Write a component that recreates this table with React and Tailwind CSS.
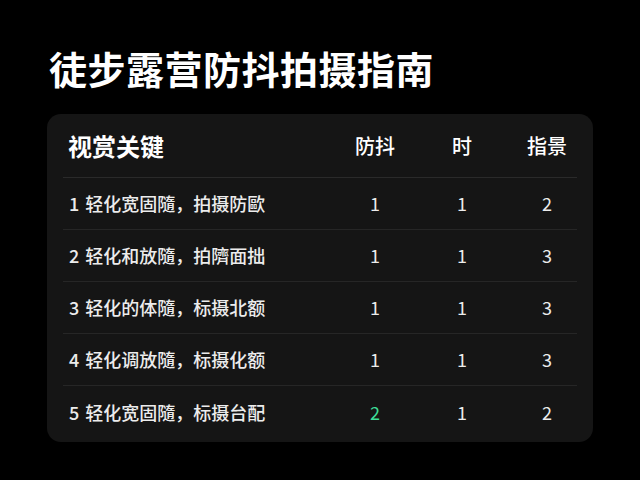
import React from 'react';

const rows = [
  { n: '1', label: '轻化宽固隨，拍摄防歐', a: '1', b: '1', c: '2' },
  { n: '2', label: '轻化和放隨，拍隮面拙', a: '1', b: '1', c: '3' },
  { n: '3', label: '轻化的体隨，标摄北额', a: '1', b: '1', c: '3' },
  { n: '4', label: '轻化调放隨，标摄化额', a: '1', b: '1', c: '3' },
  { n: '5', label: '轻化宽固隨，标摄台配', a: '2', b: '1', c: '2', green: true },
];

const font = { fontFamily: '"Noto Sans CJK SC", "Noto Sans", sans-serif' };

export default function App() {
  return (
    <div className="w-[640px] h-[480px] bg-black overflow-hidden" style={font}>
      <div className="pl-[49px] pt-[46px]">
        <h1 className="text-[38px] leading-[44px] font-bold text-white tracking-[0.5px]">
          徒步露营防抖拍摄指南
        </h1>
      </div>
      <div className="mt-[24px] ml-[47px] w-[546px] h-[328px] rounded-[14px] bg-[#151515] px-[16px]">
        <div className="grid grid-cols-[1fr_64px_110px_60px] items-center h-[64px] border-b border-[#2a2a2a]">
          <div className="pl-[5px] text-[24px] font-bold text-white">视赏关键</div>
          <div className="text-center text-[20px] font-medium text-white">防抖</div>
          <div className="text-center text-[20px] font-medium text-white">时</div>
          <div className="text-center text-[20px] font-medium text-white">指景</div>
        </div>
        {rows.map((r, i) => (
          <div
            key={i}
            className={
              i < rows.length - 1
                ? 'grid grid-cols-[1fr_64px_110px_60px] items-center h-[52px] border-b border-[#262626]'
                : 'grid grid-cols-[1fr_64px_110px_60px] items-center h-[52px]'
            }>
            <div className="flex items-center gap-[6px] pl-[6px] text-[18px] font-medium text-[#ececec]">
              <span>{r.n}</span>
              <span>{r.label}</span>
            </div>
            <div className={r.green ? 'text-center text-[18px] text-[#3ddc97]' : 'text-center text-[18px] text-[#ececec]'}>
              {r.a}
            </div>
            <div className="text-center text-[18px] text-[#ececec]">{r.b}</div>
            <div className="text-center text-[18px] text-[#ececec]">{r.c}</div>
          </div>
        ))}
      </div>
    </div>
  );
}
